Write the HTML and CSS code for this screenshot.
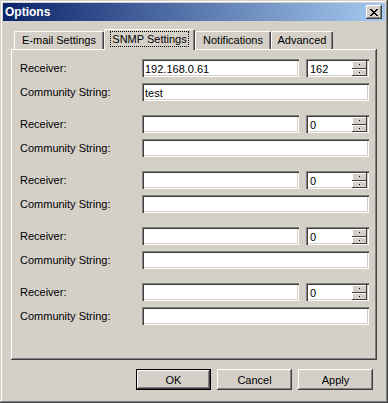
FILE: index.html
```html
<!DOCTYPE html>
<html>
<head>
    <title>Options</title>
    <link rel="stylesheet" href="styles.css">
</head>
<body>
    <div class="window">
        <div class="titleBar">
            <span class="title">Options</span>
            <div class="closeButton">
                <svg width="8" height="7" viewBox="0 0 8 7">
                    <path d="M0 0h2v1h1v1h2v-1h1v-1h2v1h-1v1h-1v1h-1v1h1v1h1v1h1v1h-2v-1h-1v-1h-2v1h-1v1h-2v-1h1v-1h1v-1h1v-1h-1v-1h-1v-1h-1z" fill="#000"/>
                </svg>
            </div>
        </div>

        <div class="tabRow">
            <div class="tab tabEmail">E-mail Settings</div>
            <div class="tab tabActive"><span class="focusRect">SNMP Settings</span></div>
            <div class="tab tabNotify">Notifications</div>
            <div class="tab tabAdvanced">Advanced</div>
        </div>

        <div class="tabPanel">
            <div class="receiverGroup">
                <label class="fieldLabel">Receiver:</label>
                <input class="textBox" type="text" value="192.168.0.61">
                <div class="spinBox">
                    <input class="spinInput" type="text" value="162">
                    <div class="spinButtons"><div class="spinButton"><i></i></div><div class="spinButton"><i></i></div></div>
                </div>
                <label class="fieldLabel">Community String:</label>
                <input class="textBox wide" type="text" value="test">
            </div>

            <div class="receiverGroup">
                <label class="fieldLabel">Receiver:</label>
                <input class="textBox" type="text" value="">
                <div class="spinBox">
                    <input class="spinInput" type="text" value="0">
                    <div class="spinButtons"><div class="spinButton"><i></i></div><div class="spinButton"><i></i></div></div>
                </div>
                <label class="fieldLabel">Community String:</label>
                <input class="textBox wide" type="text" value="">
            </div>

            <div class="receiverGroup">
                <label class="fieldLabel">Receiver:</label>
                <input class="textBox" type="text" value="">
                <div class="spinBox">
                    <input class="spinInput" type="text" value="0">
                    <div class="spinButtons"><div class="spinButton"><i></i></div><div class="spinButton"><i></i></div></div>
                </div>
                <label class="fieldLabel">Community String:</label>
                <input class="textBox wide" type="text" value="">
            </div>

            <div class="receiverGroup">
                <label class="fieldLabel">Receiver:</label>
                <input class="textBox" type="text" value="">
                <div class="spinBox">
                    <input class="spinInput" type="text" value="0">
                    <div class="spinButtons"><div class="spinButton"><i></i></div><div class="spinButton"><i></i></div></div>
                </div>
                <label class="fieldLabel">Community String:</label>
                <input class="textBox wide" type="text" value="">
            </div>

            <div class="receiverGroup">
                <label class="fieldLabel">Receiver:</label>
                <input class="textBox" type="text" value="">
                <div class="spinBox">
                    <input class="spinInput" type="text" value="0">
                    <div class="spinButtons"><div class="spinButton"><i></i></div><div class="spinButton"><i></i></div></div>
                </div>
                <label class="fieldLabel">Community String:</label>
                <input class="textBox wide" type="text" value="">
            </div>
        </div>

        <div class="dialogButtons">
            <button class="pushButton defaultButton">OK</button>
            <button class="pushButton">Cancel</button>
            <button class="pushButton">Apply</button>
        </div>
    </div>
</body>
</html>
```

FILE: styles.css
```css
* {
    box-sizing: border-box;
}

body {
    margin: 0;
    font-family: "Liberation Sans", Arial, sans-serif;
    font-size: 11px;
    color: #000;
    background-color: #d4d0c8;
}

.window {
    width: 388px;
    height: 403px;
    padding: 3px;
    background-color: #d4d0c8;
    box-shadow: inset -1px -1px #404040, inset 1px 1px #d4d0c8,
                inset -2px -2px #808080, inset 2px 2px #fff;
}

.titleBar {
    height: 18px;
    display: flex;
    align-items: center;
    justify-content: space-between;
    padding: 0 3px 0 2px;
    background: linear-gradient(to right, #0a246a, #a6caf0);
}

.title {
    color: white;
    font-weight: bold;
    font-size: 12px;
}

.closeButton {
    width: 16px;
    height: 14px;
    display: flex;
    align-items: center;
    justify-content: center;
    background-color: #d4d0c8;
    box-shadow: inset -1px -1px #404040, inset 1px 1px #fff,
                inset -2px -2px #808080, inset 2px 2px #d4d0c8;
}

/* tabs */
.tabRow {
    display: flex;
    align-items: flex-end;
    height: 20px;
    margin-top: 8px;
    padding-left: 11px;
}

.tab {
    height: 18px;
    padding-top: 2px;
    text-align: center;
    border-top: 1px solid #fff;
    border-left: 1px solid #fff;
    border-right: 1px solid #404040;
    box-shadow: inset -1px 0 #808080;
    border-radius: 2px 2px 0 0;
}

.tabEmail {
    width: 90px;
}

.tabActive {
    position: relative;
    width: 91px;
    height: 21px;
    margin-bottom: -1px;
    padding-top: 2px;
    background-color: #d4d0c8;
}

.focusRect {
    display: inline-block;
    padding: 0 1px;
    line-height: 14px;
    outline: 1px dotted #000;
}

.tabNotify {
    width: 76px;
}

.tabAdvanced {
    width: 62px;
}

.tabPanel {
    width: 366px;
    height: 311px;
    margin-left: 8px;
    padding: 10px 0 0 9px;
    display: flex;
    flex-direction: column;
    gap: 14px;
    box-shadow: inset -1px -1px #404040, inset 1px 1px #fff,
                inset -2px -2px #808080;
}

.receiverGroup {
    display: grid;
    grid-template-columns: 122px 157px 7px 63px;
    grid-template-rows: 18px 18px;
    row-gap: 6px;
    align-items: center;
}

.fieldLabel {
    grid-column: 1;
}

.textBox,
.spinBox {
    height: 18px;
    background-color: white;
    border: none;
    box-shadow: inset 1px 1px #808080, inset 2px 2px #404040,
                inset -1px -1px #fff, inset -2px -2px #d4d0c8;
}

.textBox {
    grid-column: 2;
    width: 100%;
    padding: 2px 3px 0 3px;
    font-family: inherit;
    font-size: 11px;
    outline: none;
}

.textBox.wide {
    grid-column: 2 / 5;
}

.spinBox {
    grid-column: 4;
    display: flex;
    padding: 2px 2px 1px 2px;
}

.spinInput {
    flex: 1;
    min-width: 0;
    border: none;
    background: transparent;
    padding: 1px 0 0 2px;
    font-family: inherit;
    font-size: 11px;
    outline: none;
}

.spinButtons {
    width: 15px;
    display: flex;
    flex-direction: column;
}

.spinButton {
    flex: 1;
    display: flex;
    align-items: center;
    justify-content: center;
    background-color: #d4d0c8;
    box-shadow: inset -1px -1px #404040, inset 1px 1px #fff;
}

.spinButton i {
    width: 1px;
    height: 1px;
    background-color: #000;
}

/* bottom buttons */
.dialogButtons {
    display: flex;
    justify-content: flex-end;
    gap: 6px;
    margin-top: 9px;
    padding-right: 12px;
}

.pushButton {
    width: 75px;
    height: 21px;
    padding: 0;
    border: none;
    font-family: inherit;
    font-size: 11px;
    color: #000;
    background-color: #d4d0c8;
    box-shadow: inset -1px -1px #404040, inset 1px 1px #fff,
                inset -2px -2px #808080, inset 2px 2px #d4d0c8;
}

.defaultButton {
    box-shadow: inset 0 0 0 1px #000, inset -2px -2px #404040, inset 2px 2px #fff,
                inset -3px -3px #808080;
}
```
